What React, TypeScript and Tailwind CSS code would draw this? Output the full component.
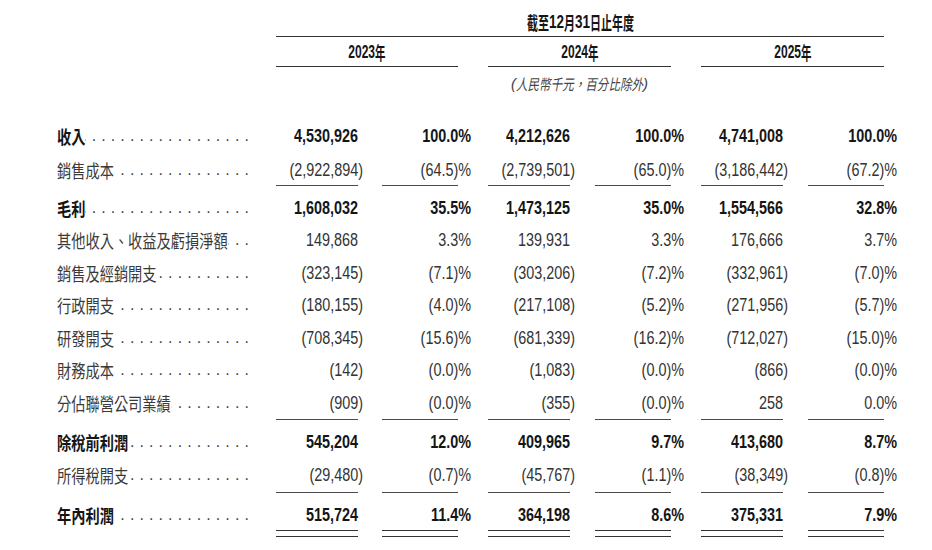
import React from "react";

type Line = "none" | "single" | "double";

type Row = {
  label: string;
  fit: string; // pulls the squeezed label's layout box in to its drawn width
  bold?: boolean;
  v: string[];
  row: string;
  line: Line;
};

const rows: Row[] = [
  { label: "收入", fit: "-mr-[7.56px]", bold: true, v: ["4,530,926", "100.0%", "4,212,626", "100.0%", "4,741,008", "100.0%"], row: "h-[32px]", line: "none" },
  { label: "銷售成本", fit: "-mr-[15.12px]", v: ["(2,922,894)", "(64.5)%", "(2,739,501)", "(65.0)%", "(3,186,442)", "(67.2)%"], row: "h-[34px] pt-[2px]", line: "single" },
  { label: "毛利", fit: "-mr-[7.56px]", bold: true, v: ["1,608,032", "35.5%", "1,473,125", "35.0%", "1,554,566", "32.8%"], row: "mt-[6px] h-[32px]", line: "none" },
  { label: "其他收入、收益及虧損淨額", fit: "-mr-[45.36px]", v: ["149,868", "3.3%", "139,931", "3.3%", "176,666", "3.7%"], row: "h-[32.5px]", line: "none" },
  { label: "銷售及經銷開支", fit: "-mr-[26.46px]", v: ["(323,145)", "(7.1)%", "(303,206)", "(7.2)%", "(332,961)", "(7.0)%"], row: "h-[32.5px]", line: "none" },
  { label: "行政開支", fit: "-mr-[15.12px]", v: ["(180,155)", "(4.0)%", "(217,108)", "(5.2)%", "(271,956)", "(5.7)%"], row: "h-[32.5px]", line: "none" },
  { label: "研發開支", fit: "-mr-[15.12px]", v: ["(708,345)", "(15.6)%", "(681,339)", "(16.2)%", "(712,027)", "(15.0)%"], row: "h-[32.5px]", line: "none" },
  { label: "財務成本", fit: "-mr-[15.12px]", v: ["(142)", "(0.0)%", "(1,083)", "(0.0)%", "(866)", "(0.0)%"], row: "h-[32.5px]", line: "none" },
  { label: "分佔聯營公司業績", fit: "-mr-[30.24px]", v: ["(909)", "(0.0)%", "(355)", "(0.0)%", "258", "0.0%"], row: "h-[33px]", line: "single" },
  { label: "除稅前利潤", fit: "-mr-[18.9px]", bold: true, v: ["545,204", "12.0%", "409,965", "9.7%", "413,680", "8.7%"], row: "mt-[6px] h-[32px]", line: "none" },
  { label: "所得稅開支", fit: "-mr-[18.9px]", v: ["(29,480)", "(0.7)%", "(45,767)", "(1.1)%", "(38,349)", "(0.8)%"], row: "h-[35px] pt-[1px]", line: "single" },
  { label: "年內利潤", fit: "-mr-[15.12px]", bold: true, v: ["515,724", "11.4%", "364,198", "8.6%", "375,331", "7.9%"], row: "mt-[6.5px] h-[38px]", line: "double" },
];

const NUM = "font-['Liberation_Sans',Arial,sans-serif]";
const CJK = "font-['Noto_Sans_CJK_TC',sans-serif]";

// trailing ")" and "%" hang past the rule, as in the printed table
function hang(s: string) {
  if (s.endsWith("%")) return "-mr-[13px]";
  if (s.endsWith(")")) return "-mr-[5px]";
  return "";
}

function Cell({ s, wide, bold, line }: { s: string; wide: boolean; bold?: boolean; line: Line }) {
  return (
    <div className={wide ? "w-[82px] h-full" : "w-[76px] h-full"}>
      <div
        className={
          "h-[32px] flex items-center justify-end whitespace-nowrap leading-[20px] text-[18px] " +
          NUM +
          " " +
          (bold ? "font-bold text-[#151515]" : "text-[#333]") +
          (line === "single" ? " h-full border-b border-[#4a4a4a]" : "") +
          (line === "double" ? " border-b border-[#333]" : "")
        }
      >
        <span className={"inline-block origin-right scale-x-[0.8] " + hang(s)}>{s}</span>
      </div>
      {line === "double" && <div className="h-[6px] border-b border-[#333]" />}
    </div>
  );
}

function Label({ text, fit, bold }: { text: string; fit: string; bold?: boolean }) {
  return (
    <div className="w-[192px] h-[32px] flex items-center">
      <span
        className={
          "inline-block whitespace-nowrap origin-left scale-x-[0.79] text-[18px] leading-[22px] " +
          CJK +
          " " +
          fit +
          " " +
          (bold ? "font-bold text-[#151515]" : "text-[#3a3a3a]")
        }
      >
        {text}
      </span>
      <div className="flex-1 min-w-0 overflow-hidden flex justify-end">
        <span className="-mr-[5px] whitespace-nowrap font-['Liberation_Sans',sans-serif] text-[16px] tracking-[5.1px] text-[#444] leading-[20px]">
          ........................................
        </span>
      </div>
    </div>
  );
}

function YearHead({ year, w }: { year: string; w: string }) {
  return (
    <div className={w + " h-[30px] border-b border-[#333] flex items-center justify-center text-[#151515] font-bold leading-[20px] whitespace-nowrap"}>
      <span className={"inline-block origin-right scale-x-[0.67] -ml-[13.2px] text-[18px] " + NUM}>{year}</span>
      <span className={"inline-block origin-left scale-x-[0.58] -mr-[7.56px] text-[18px] " + CJK}>年</span>
    </div>
  );
}

export default function App() {
  return (
    <div className="w-[932px] h-[550px] bg-white overflow-hidden">
      <div className="ml-[276px] w-[608px]">
        <div className="h-[37px] pb-[4px] flex items-end justify-center border-b border-[#333] leading-[20px] text-[#151515] font-bold whitespace-nowrap">
          <span className={"inline-block origin-right scale-x-[0.61] -ml-[14px] text-[18px] " + CJK}>截至</span>
          <span className={"inline-block origin-left scale-x-[0.75] -mr-[5px] text-[18px] " + NUM}>12</span>
          <span className={"inline-block origin-left scale-x-[0.61] -mr-[7.02px] text-[18px] " + CJK}>月</span>
          <span className={"inline-block origin-left scale-x-[0.75] -mr-[5px] text-[18px] " + NUM}>31</span>
          <span className={"inline-block origin-left scale-x-[0.61] -mr-[28.08px] text-[18px] " + CJK}>日止年度</span>
        </div>
        <div className="flex gap-[30px]">
          <YearHead year="2023" w="w-[182px]" />
          <YearHead year="2024" w="w-[183px]" />
          <YearHead year="2025" w="w-[183px]" />
        </div>
        <div className="flex gap-[30px]">
          <div className="w-[182px]" />
          <div className="w-[183px] h-[33px] flex items-center justify-center italic text-[#444] leading-[20px] whitespace-nowrap">
            <span className={"text-[15px] " + NUM}>(</span>
            <span className={"inline-block origin-left scale-x-[0.77] -mr-[37.95px] text-[15px] " + CJK}>人民幣千元，百分比除外</span>
            <span className={"text-[15px] " + NUM}>)</span>
          </div>
        </div>
      </div>

      <div className="mt-[20px] pl-[57px]">
        {rows.map((r) => (
          <div key={r.label} className={"flex " + r.row}>
            <Label text={r.label} fit={r.fit} bold={r.bold} />
            <div className="ml-[27px] flex gap-[30px] h-full">
              <div className="w-[182px] flex justify-between h-full">
                <Cell s={r.v[0]} wide bold={r.bold} line={r.line} />
                <Cell s={r.v[1]} wide={false} bold={r.bold} line={r.line} />
              </div>
              <div className="w-[183px] flex justify-between h-full">
                <Cell s={r.v[2]} wide bold={r.bold} line={r.line} />
                <Cell s={r.v[3]} wide={false} bold={r.bold} line={r.line} />
              </div>
              <div className="w-[183px] flex justify-between h-full">
                <Cell s={r.v[4]} wide bold={r.bold} line={r.line} />
                <Cell s={r.v[5]} wide={false} bold={r.bold} line={r.line} />
              </div>
            </div>
          </div>
        ))}
      </div>
    </div>
  );
}
